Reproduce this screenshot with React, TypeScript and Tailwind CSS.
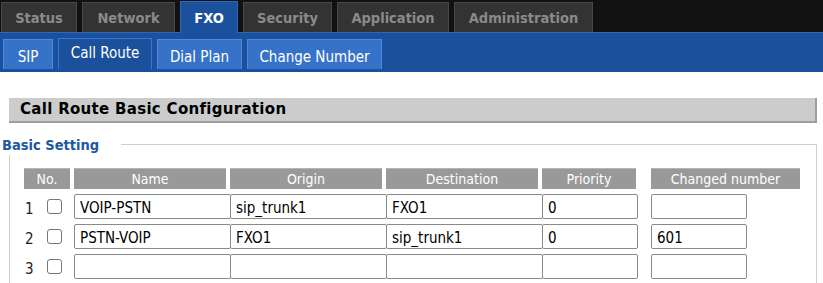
import React from "react";

const FONT = { fontFamily: '"DejaVu Sans Condensed", "DejaVu Sans", sans-serif' } as const;

const topTabs = [
  { label: "Status", w: "w-[76px]" },
  { label: "Network", w: "w-[93px]" },
  { label: "FXO", w: "w-[58px]", active: true },
  { label: "Security", w: "w-[89px]" },
  { label: "Application", w: "w-[112px]" },
  { label: "Administration", w: "w-[139px]" },
];

const subTabs = [
  { label: "SIP", w: "w-[50px]" },
  { label: "Call Route", w: "w-[94px]", active: true },
  { label: "Dial Plan", w: "w-[85px]" },
  { label: "Change Number", w: "w-[135px]" },
];

const rows = [
  { n: "1", name: "VOIP-PSTN", origin: "sip_trunk1", dest: "FXO1", prio: "0", changed: "" },
  { n: "2", name: "PSTN-VOIP", origin: "FXO1", dest: "sip_trunk1", prio: "0", changed: "601" },
  { n: "3", name: "", origin: "", dest: "", prio: "", changed: "" },
];

function Cell({ value, w, first }: { value: string; w: string; first?: boolean }) {
  return (
    <input
      readOnly
      value={value}
      className={`${w} ${first ? "" : "-ml-px"} h-[25px] border border-[#8a8a8a] rounded-[2px] bg-white px-[5px] pt-[2px] text-[15px] text-black outline-none`}
    />
  );
}

export default function App() {
  return (
    <div className="w-[823px] h-[283px] overflow-hidden bg-white" style={FONT}>
      {/* top navigation */}
      <div className="h-[32px] bg-[#111111] flex items-end gap-[5px] pl-[1px]">
        {topTabs.map((t) =>
          t.active ? (
            <div
              key={t.label}
              className={`${t.w} h-[32px] -mb-px relative z-10 bg-[#1b519c] border-t border-l border-r border-[#2f68ba] flex items-center justify-center pt-[3px] text-[14.5px] font-bold text-white`}
            >
              {t.label}
            </div>
          ) : (
            <div
              key={t.label}
              className={`${t.w} h-[30px] bg-[#333333] border-t border-l border-r border-[#484848] flex items-center justify-center pt-[3px] text-[14.5px] font-bold text-[#8a8a8a]`}
            >
              {t.label}
            </div>
          )
        )}
      </div>

      {/* sub navigation */}
      <div className="h-[40px] bg-[#1b519c] border-t border-[#2c68bd] flex items-end gap-[5px] pl-[3px] pb-[3px]">
        {subTabs.map((t) =>
          t.active ? (
            <div
              key={t.label}
              className={`${t.w} h-[31px] bg-[#1b519c] border-t border-l border-r border-[#3a76cc] flex items-center justify-center pb-[2px] text-[15px] text-white`}
            >
              {t.label}
            </div>
          ) : (
            <div
              key={t.label}
              className={`${t.w} h-[30px] bg-[#3772c9] border-t border-l border-r border-[#4f88dc] flex items-center justify-center pt-[5px] text-[15px] text-white`}
            >
              {t.label}
            </div>
          )
        )}
      </div>

      {/* heading */}
      <div className="mt-[26px] ml-[9px] mr-[6px] h-[25px] bg-[#cccccc] border-b-2 border-r-2 border-[#9e9e9e] flex items-center pl-[11px]">
        <span
          className="text-[15px] font-bold text-black tracking-[0.3px]"
          style={{ fontFamily: '"DejaVu Sans", sans-serif' }}
        >
          Call Route Basic Configuration
        </span>
      </div>

      {/* fieldset */}
      <div className="mr-[6px] mt-[13px]">
        <div className="flex h-[19px]">
          <span className="pl-[2px] text-[14.5px] font-bold text-[#1d58a3] leading-[19px]">Basic Setting</span>
          <div className="flex-1 ml-[22px] mt-[8px] border-t border-r border-[#cfcfcf]" />
        </div>
        <div className="ml-[9px] border-l border-r border-[#cfcfcf] pl-[14px] pt-[13px] h-[200px]">
          {/* header */}
          <div className="flex h-[21px] text-[14px] text-white">
            <div className="w-[46px] bg-[#999999] border-t border-[#b5b5b5] flex items-center justify-center">No.</div>
            <div className="w-[152px] ml-[4px] bg-[#999999] border-t border-[#b5b5b5] flex items-center justify-center">Name</div>
            <div className="w-[152px] ml-[4px] bg-[#999999] border-t border-[#b5b5b5] flex items-center justify-center">Origin</div>
            <div className="w-[152px] ml-[4px] bg-[#999999] border-t border-[#b5b5b5] flex items-center justify-center">Destination</div>
            <div className="w-[94px] ml-[4px] bg-[#999999] border-t border-[#b5b5b5] flex items-center justify-center">Priority</div>
            <div className="w-[149px] ml-[15px] bg-[#999999] border-t border-[#b5b5b5] flex items-center justify-center">Changed number</div>
          </div>
          {/* rows */}
          <div className="flex flex-col gap-[5px] mt-[5px]">
            {rows.map((r) => (
              <div key={r.n} className="flex items-center h-[25px]">
                <span className="w-[23px] pl-[1px] pt-[5px] text-[15px] text-[#222222]">{r.n}</span>
                <span className="w-[15px] h-[15px] border border-[#767676] rounded-[3px] bg-white" />
                <div className="w-[12px]" />
                <Cell value={r.name} w="w-[157px]" first />
                <Cell value={r.origin} w="w-[157px]" />
                <Cell value={r.dest} w="w-[157px]" />
                <Cell value={r.prio} w="w-[96px]" />
                <Cell value={r.changed} w="w-[96px] ml-[13px]" first />
              </div>
            ))}
          </div>
        </div>
      </div>
    </div>
  );
}
